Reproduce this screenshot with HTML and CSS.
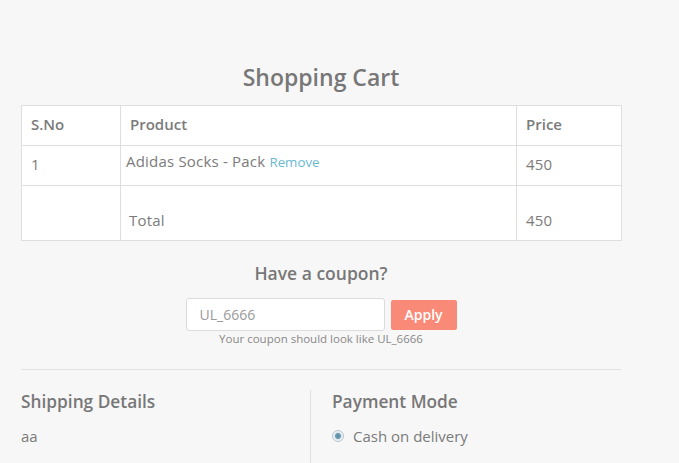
FILE: index.html
```html
<!DOCTYPE html>
<html>
<head>
<meta charset="utf-8">
<link rel="stylesheet" href="styles.css">
</head>
<body>
<div class="page">
  <h1 class="title">Shopping Cart</h1>
  <table class="cart">
    <colgroup><col class="c1"><col class="c2"><col class="c3"></colgroup>
    <thead>
      <tr><th>S.No</th><th>Product</th><th>Price</th></tr>
    </thead>
    <tbody>
      <tr class="item"><td>1</td><td class="prod">Adidas Socks - Pack <a class="remove" href="#">Remove</a></td><td>450</td></tr>
      <tr class="total"><td></td><td class="tlabel">Total</td><td>450</td></tr>
    </tbody>
  </table>

  <div class="coupon">
    <h2 class="coupon-title">Have a coupon?</h2>
    <div class="coupon-row">
      <input class="coupon-input" type="text" placeholder="UL_6666">
      <button class="apply">Apply</button>
    </div>
    <p class="hint">Your coupon should look like UL_6666</p>
  </div>

  <div class="rule"></div>

  <div class="details">
    <div class="col shipping">
      <h3 class="sub">Shipping Details</h3>
      <p class="val">aa</p>
    </div>
    <div class="col payment">
      <h3 class="sub">Payment Mode</h3>
      <label class="radio"><span class="dot"></span>Cash on delivery</label>
    </div>
  </div>
</div>
</body>
</html>
```
FILE: styles.css
```css
html, body { margin: 0; padding: 0; }
body {
  background: #f7f7f7;
  font-family: "Open Sans", "Liberation Sans", sans-serif;
  color: #7b7b7b;
  height: 463px;
  overflow: hidden;
}
.page {
  width: 600px;
  margin-left: 21px;
  padding-top: 62px;
}
.title {
  margin: 0;
  text-align: center;
  font-size: 23px;
  line-height: 30px;
  font-weight: 600;
  color: #777;
}
.cart {
  margin-top: 13px;
  width: 600px;
  border-collapse: collapse;
  background: #fff;
  font-size: 15px;
  letter-spacing: 0.2px;
  table-layout: fixed;
}
.c1 { width: 99px; }
.c2 { width: 396px; }
.c3 { width: 105px; }
.cart th, .cart td {
  border: 1px solid #dedede;
  text-align: left;
  padding: 0 9px 3px;
  color: #7b7b7b;
  box-sizing: border-box;
}
.cart th { height: 40px; font-weight: 600; font-size: 15px; letter-spacing: 0; }
.cart td { height: 40px; }
.cart td.prod { padding-left: 5px; vertical-align: top; padding-top: 5px; }
.remove { color: #6ab9d0; text-decoration: none; font-size: 13.3px; letter-spacing: 0; }
.cart tr.total td { height: 55px; vertical-align: bottom; padding-bottom: 10px; }
.cart tr.total td.tlabel { padding-left: 8px; }
.coupon { text-align: center; }
.coupon-title {
  margin: 21px 0 0;
  font-size: 17.5px;
  line-height: 22px;
  font-weight: 600;
  color: #777;
}
.coupon-row {
  margin-top: 14px;
  display: flex;
  justify-content: center;
  align-items: center;
  gap: 6px;
}
.coupon-input {
  width: 199px;
  height: 33px;
  box-sizing: border-box;
  border: 1px solid #dcdcdc;
  border-radius: 3px;
  background: #fff;
  padding: 0 13px;
  font-family: inherit;
  font-size: 14px;
  color: #777;
  outline: none;
}
.coupon-input::placeholder { color: #999; }
.apply {
  width: 66px;
  height: 30px;
  border: none;
  border-radius: 2px;
  background: #f98a78;
  color: #fff;
  font-family: inherit;
  font-weight: 600;
  font-size: 14px;
  padding: 0;
}
.hint {
  margin: 1px 0 0;
  font-size: 11.5px;
  line-height: 14px;
  color: #888;
}
.rule {
  margin-top: 23px;
  height: 1px;
  background: #e2e2e2;
}
.details {
  display: flex;
  margin-top: 20px;
}
.shipping { width: 289px; border-right: 1px solid #e0e0e0; }
.payment { padding-left: 21px; height: 80px; }
.sub {
  margin: 0;
  font-size: 17.3px;
  line-height: 24px;
  font-weight: 600;
  color: #777;
}
.val { margin: 12px 0 0; font-size: 15px; line-height: 20px; }
.radio {
  margin-top: 12px;
  display: flex;
  align-items: center;
  font-size: 15px;
  line-height: 20px;
}
.dot {
  width: 10px;
  height: 10px;
  border-radius: 50%;
  border: 1px solid #b8c4cc;
  background: radial-gradient(circle, #5a8ba6 0, #6d9bb3 2.5px, #dfe8ee 3.5px, #f4f7f9 5px);
  margin-left: 0;
  margin-right: 9px;
}
```
